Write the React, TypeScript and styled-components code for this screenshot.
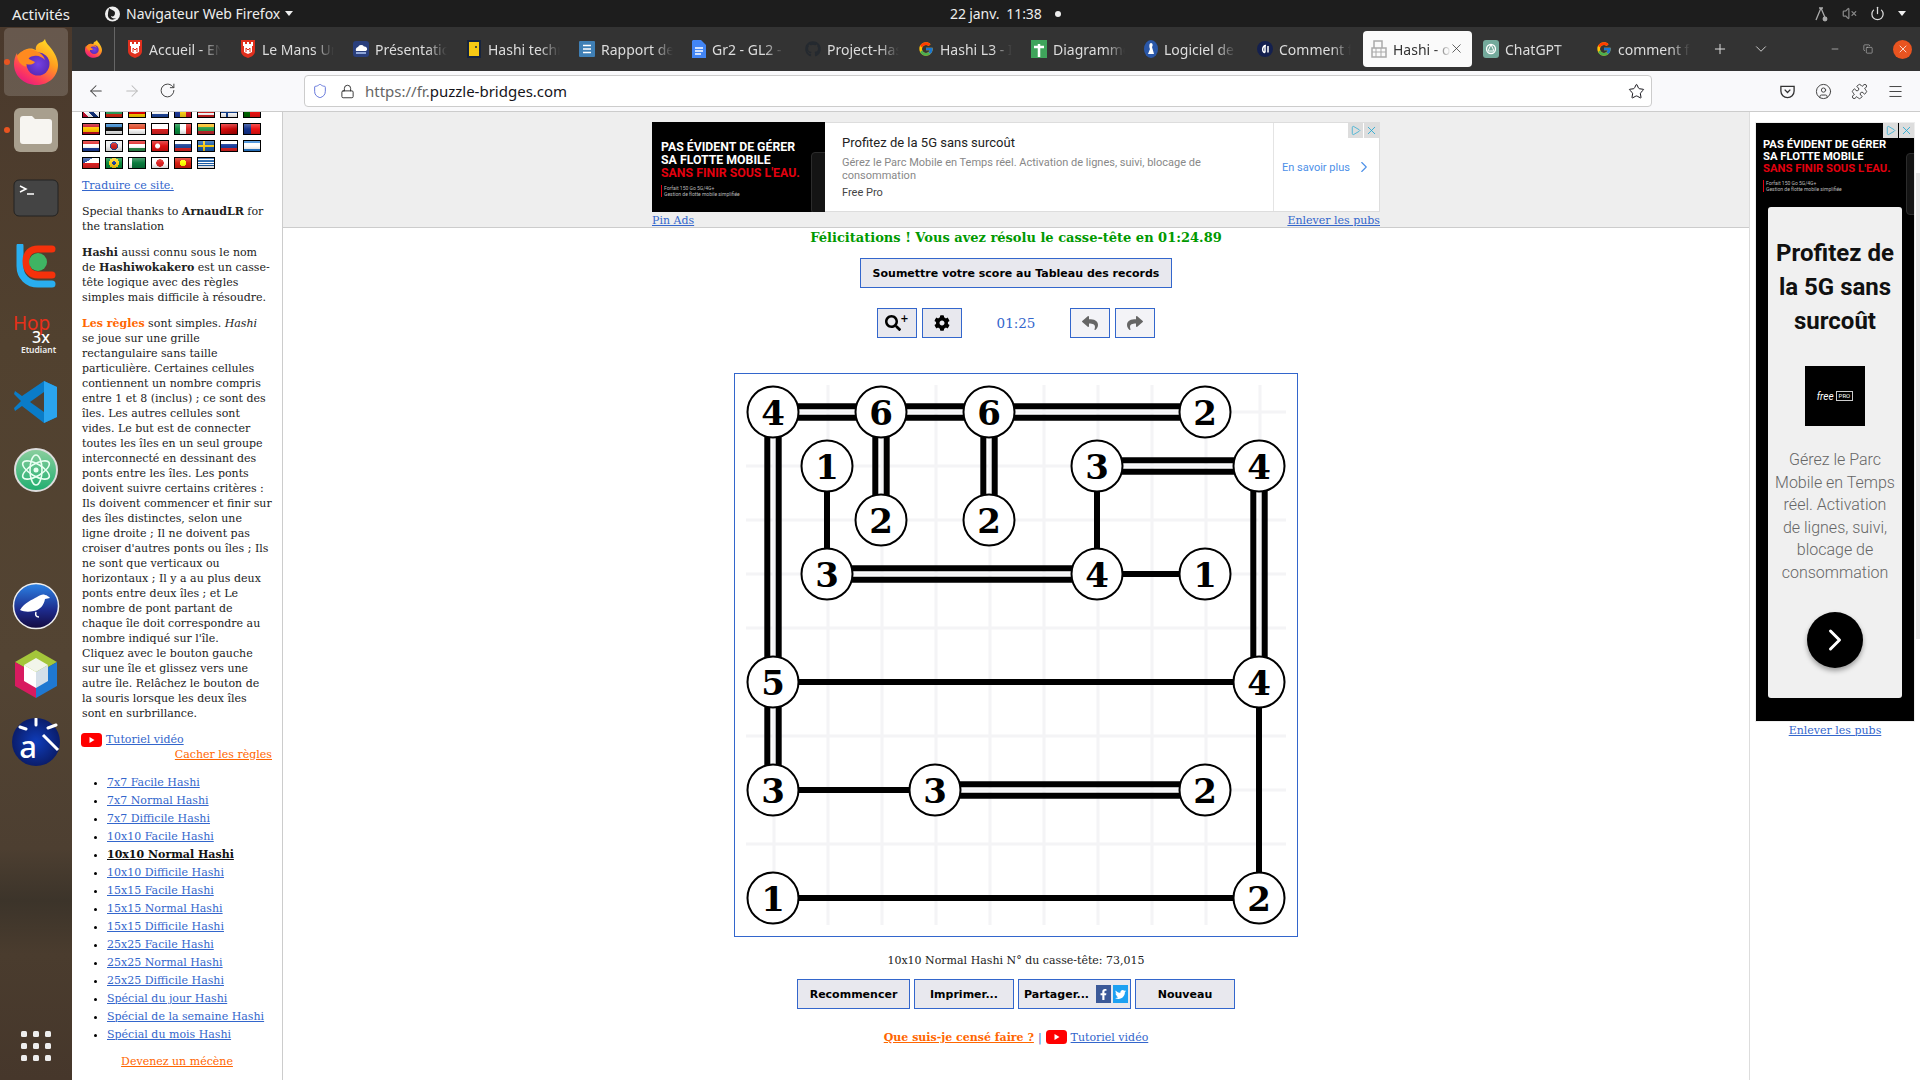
import React from 'react';
import styled, { createGlobalStyle } from 'styled-components';
import { ArrowLeft, ArrowRight, RotateCw, Star, Lock, Shield, Menu, Plus, ChevronDown, Minus, X, VolumeX, Power, Puzzle, CircleUser, Play, ChevronRight, Copy } from 'lucide-react';
import { FaFacebookF, FaTwitter, FaSearch, FaCog, FaReply, FaShare, FaGithub } from 'react-icons/fa';
import { FcGoogle } from 'react-icons/fc';

const Global = createGlobalStyle`
  html, body { margin: 0; padding: 0; height: 1080px; overflow: hidden; background: #fff; }
  * { box-sizing: border-box; }
  body { font-family: "DejaVu Serif", serif; font-size: 11px; color: #222; }
  a { color: #3366cc; }
`;

const uiFont = `"Noto Sans", "Open Sans", sans-serif`;

const Screen = styled.div`
  width: 1920px; height: 1080px; display: flex; flex-direction: column; overflow: hidden; position: relative;
`;
const TopBar = styled.div`
  height: 27px; background: #1d1d1d; color: #eee; font: 14px ${uiFont}; display: flex; align-items: center; position: relative; flex: none;
`;
const Activities = styled.span`margin-left: 12px; width: 92px; font-size: 15px; letter-spacing: -.1px;`;
const AppMenu = styled.span`display: flex; align-items: center; gap: 5px; width: 846px;`;
const Clock = styled.span`display: flex; align-items: center; gap: 13px; width: 125px; letter-spacing: -.1px;`;
const RecDot = styled.i`width: 6px; height: 6px; background: #eee; border-radius: 50%; display: block;`;
const Tray = styled.div`margin-left: auto; margin-right: 14px; display: flex; align-items: center; gap: 13px; color: #bbb;`;
const Caret = styled.i`width: 0; height: 0; border: 4.5px solid transparent; border-top: 5px solid #eee; border-bottom: 0; display: block;`;

const Body = styled.div`flex: 1; display: flex; min-height: 0;`;
const Dock = styled.div`
  width: 72px; flex: none; display: flex; flex-direction: column; padding-top: 1px; position: relative;
  background: linear-gradient(#4a392c 0, #51412f 30%, #534433 60%, #4d3f31 78%, #3c342a 83%, #4a3c2e 88%, #46372b 100%);
`;
const Slot = styled.div<{ $active?: boolean }>`
  height: 68px; flex: none; display: flex; align-items: center; justify-content: center; position: relative;
  margin: 0 4px; border-radius: 5px;
  background: ${p => p.$active ? 'rgba(255,255,255,.16)' : 'transparent'};
`;
const RunDot = styled.i`position: absolute; left: 0; top: 31px; width: 6px; height: 6px; border-radius: 50%; background: #e95420;`;
const HopIcon = styled.div`display: flex; flex-direction: column; align-items: center; font-family: "Noto Sans", sans-serif; line-height: 1; width: 44px;`;
const HopWord = styled.span`color: #e8301a; font-size: 19px; align-self: flex-start; margin-left: -1px; height: 15px;`;
const HopTimes = styled.span`color: #fff; font-size: 16px; font-weight: 500; margin: 0 0 1px 10px;`;
const HopSub = styled.span`color: #eee; font-size: 8.5px; font-weight: 600; margin-left: 5px;`;
const AppGrid = styled.div`
  margin-top: auto; margin-bottom: 19px; align-self: center; display: grid; grid-template-columns: repeat(3, 6px); gap: 6px;
`;
const AppDot = styled.i`width: 6px; height: 6px; background: #eee; border-radius: 1.5px; display: block;`;

const Browser = styled.div`flex: 1; display: flex; flex-direction: column; min-width: 0;`;
const TabBar = styled.div`height: 44px; background: #333; display: flex; align-items: center; flex: none; color: #ddd; font: 14px ${uiFont};`;
const BrandCell = styled.div`width: 43px; height: 44px; flex: none; display: flex; align-items: center; justify-content: center; border-right: 1px solid #666;`;
const Tab = styled.div<{ $active?: boolean }>`
  width: 113px; height: 36px; flex: none; display: flex; align-items: center; gap: 6px; position: relative;
  padding-left: ${p => p.$active ? '8px' : '12px'};
  ${p => p.$active ? `background:#fafafa;color:#333;border-radius:4px;width:109px;margin:0 -1px 0 5px;` : ''}
`;
const TabLabel = styled.span<{ $short?: boolean }>`
  width: ${p => p.$short ? '58px' : '72px'}; white-space: nowrap; overflow: hidden; display: block;
  -webkit-mask-image: linear-gradient(90deg, #000 72%, transparent);
  mask-image: linear-gradient(90deg, #000 72%, transparent);
`;
const TabClose = styled.span`position: absolute; right: 8px; top: 10px; display: flex;`;
const TabControls = styled.div`display: flex; align-items: center; margin-left: 15px; color: #ddd; flex: 1;`;
const ControlGap = styled.span<{ $w: number }>`width: ${p => p.$w}px; flex: none; display: block;`;
const CloseDot = styled.span`width: 19px; height: 19px; border-radius: 50%; background: #e95420; display: flex; align-items: center; justify-content: center; color: #fff;`;

const Toolbar = styled.div`height: 41px; background: #f9f9fb; border-bottom: 1px solid #ccc; display: flex; align-items: center; flex: none; color: #444;`;
const NavIcons = styled.div`width: 232px; padding-left: 15px; display: flex; gap: 18px; flex: none;`;
const UrlBox = styled.div`
  width: 1348px; height: 32px; background: #fff; border: 1px solid #ccc; border-radius: 4px; display: flex; align-items: center; flex: none;
  padding: 0 6px 0 7px; font: 15px ${uiFont}; color: #15141a;
`;
const UrlIcons = styled.span`display: flex; align-items: center; gap: 12px; margin-right: 10px; color: #222;`;
const UrlMuted = styled.span`color: #666;`;
const StarWrap = styled.span`margin-left: auto; display: flex; margin-right: 0;`;
const RightTools = styled.div`display: flex; align-items: center; gap: 19px; margin-left: 127px;`;

const Page = styled.div`flex: 1; display: flex; min-height: 0; background: #fff;`;
const Sidebar = styled.aside`width: 211px; flex: none; border-right: 1px solid #ccc; overflow: hidden; line-height: 15px;`;
const SideInner = styled.div`padding: 0 10px; margin-top: -6px;`;
const Flags = styled.div`display: flex; flex-wrap: wrap; gap: 5px; width: 190px; margin-bottom: -2px;`;
const Flag = styled.i<{ $bg: string }>`
  display: block; width: 18px; height: 12px; border: 1px solid #000; background: ${p => p.$bg}; position: relative;
  &::after { content: ""; position: absolute; inset: 0; background: linear-gradient(rgba(255,255,255,.28), rgba(255,255,255,0) 50%, rgba(0,0,0,.18)); }
`;
const Para = styled.p`margin: 11px 0 0;`;
const Orange = styled.b`color: #ff6600;`;
const VideoRow = styled.div`margin: 11px 0 0 -1px; display: flex; align-items: center; gap: 4px; height: 15px;`;
const RightLink = styled.div`text-align: right; height: 15px;`;
const OrangeLink = styled.a`color: #ff6600;`;
const Levels = styled.ul`margin: 12px 0 0; padding: 0 0 0 25px; line-height: 18px; color: #000;`;
const LevelItem = styled.li<{ $current?: boolean }>`a { ${p => p.$current ? 'color:#111;font-weight:700;' : ''} }`;
const Center = styled.div`text-align: center; margin-top: 10px;`;

const Main = styled.main`flex: 1; min-width: 0; display: flex; flex-direction: column; align-items: center;`;
const AdBand = styled.div`
  width: 100%; height: 116px; background: #eee; border-bottom: 1px solid #ccc; flex: none; display: flex; flex-direction: column; align-items: center; padding-top: 10px;
`;
const Banner = styled.div`width: 728px; height: 90px; background: #fff; border: 1px solid #ddd; display: flex; position: relative; font-family: Roboto, sans-serif; flex: none;`;
const BannerArt = styled.div`width: 173px; background: #000; flex: none; margin: -1px 0 -1px -1px; padding: 19px 0 0 9px; position: relative; overflow: hidden;`;
const ArtLine = styled.div<{ $red?: boolean; $size?: number; $lh?: number }>`
  color: ${p => p.$red ? '#e3000f' : '#fff'}; font-weight: 700; white-space: nowrap;
  font-size: ${p => p.$size || 11}px; line-height: ${p => p.$lh || 13}px;
`;
const ArtSmall = styled.div`color: #bbb; font-size: 5px; line-height: 6px; margin-top: 5px; border-left: 1px solid #e3000f; padding-left: 2px; white-space: nowrap;`;
const Phone = styled.i<{ $r: number; $t: number }>`
  position: absolute; right: ${p => p.$r}px; top: ${p => p.$t}px; width: 22px; height: 62px; border-radius: 4px; background: #141414; border: 1px solid #2c2c2c; display: block;
`;
const BannerCopy = styled.div`flex: 1; padding: 11px 17px 0; display: flex; flex-direction: column;`;
const BannerTitle = styled.div`font-size: 13px; line-height: 18px; color: #222;`;
const BannerDesc = styled.div`font-size: 11px; line-height: 13px; color: #888; margin-top: 4px; width: 370px;`;
const BannerBrand = styled.div`font-size: 11px; line-height: 14px; color: #444; margin-top: 4px;`;
const BannerCta = styled.div`width: 106px; border-left: 1px solid #e4e4e4; color: #4d90e8; font-size: 11px; display: flex; align-items: center; padding-left: 8px; gap: 5px; white-space: nowrap; flex: none;`;
const AdBadges = styled.div`position: absolute; right: 0; top: 0; display: flex; gap: 1px;`;
const AdBadge = styled.span`width: 15px; height: 15px; background: #ddd; color: #1aa6d0; display: flex; align-items: center; justify-content: center;`;
const BannerLinks = styled.div`width: 728px; display: flex; justify-content: space-between; line-height: 15px; height: 15px; padding-top: 1px;`;
const Congrats = styled.div`color: #009900; font-weight: 700; font-size: 13px; line-height: 18px; height: 18px; padding-top: 1px; white-space: nowrap;`;
const Button = styled.button<{ $w: number; $left?: boolean }>`
  width: ${p => p.$w}px; height: 30px; padding: 0; background: #e8e8ee; border: 1px solid #3366cc; color: #000; flex: none;
  font: 700 11px "DejaVu Sans", sans-serif; display: flex; align-items: center; justify-content: ${p => p.$left ? 'flex-start' : 'center'}; ${p => p.$left ? 'padding-left: 4px;' : ''}
`;
const SubmitRow = styled.div`margin-top: 12px; flex: none;`;
const ToolRow = styled.div`margin-top: 20px; display: flex; gap: 5px; align-items: center; flex: none; height: 30px;`;
const ToolButton = styled.button<{ $off?: boolean }>`
  width: 40px; height: 30px; padding: 0; border: 1px solid #3366cc; background: ${p => p.$off ? '#f3f3f7' : '#e8e8ee'};
  color: ${p => p.$off ? '#666' : '#000'}; display: flex; align-items: center; justify-content: center; flex: none; font-size: 16px;
`;
const PlusMark = styled.sup`font: 700 10px "DejaVu Sans", sans-serif; margin: -9px 0 0 -1px; line-height: 1;`;
const Timer = styled.div`width: 98px; text-align: center; color: #3366cc; font-size: 13.5px; flex: none;`;
const Board = styled.div`margin-top: 35px; width: 564px; height: 564px; border: 1px solid #3366cc; flex: none; background: #fff;`;
const Caption = styled.div`margin-top: 16px; line-height: 16px; height: 16px; color: #222; flex: none;`;
const ActionRow = styled.div`margin-top: 10px; display: flex; gap: 4px; flex: none;`;
const ShareBox = styled.span<{ $bg: string }>`width: 15px; height: 18px; background: ${p => p.$bg}; color: #fff; display: flex; align-items: center; justify-content: center; font-size: 11px; margin-left: 2px;`;
const ShareLabel = styled.span`margin-right: 5px; padding-left: 1px;`;
const HelpRow = styled.div`margin-top: 20px; display: flex; align-items: center; gap: 4px; height: 16px; flex: none; color: #3366cc;`;
const HelpLink = styled.a`color: #ff6600; font-weight: 700;`;

const RightCol = styled.aside`width: 171px; flex: none; border-left: 1px solid #ddd; padding: 10px 0 0 5px; display: flex; flex-direction: column; align-items: flex-start; position: relative;`;
const SkyAd = styled.div`width: 160px; height: 600px; background: #000; position: relative; border: 1px solid #eee; font-family: Roboto, sans-serif; display: flex; flex-direction: column; align-items: center; overflow: hidden; flex: none;`;
const SkyArt = styled.div`width: 100%; height: 84px; padding: 16px 0 0 7px; flex: none; position: relative;`;
const SkyCard = styled.div`width: 134px; height: 491px; background: #f0f0f0; border-radius: 3px; display: flex; flex-direction: column; align-items: center; text-align: center; padding-top: 29px; flex: none;`;
const SkyTitle = styled.div`font-size: 24px; font-weight: 700; line-height: 34px; color: #111;`;
const SkyLogo = styled.div`width: 60px; height: 60px; background: #000; margin-top: 28px; color: #fff; display: flex; align-items: center; justify-content: center; gap: 2px; font-size: 10px; font-style: italic; flex: none;`;
const SkyPro = styled.span`border: 1px solid #ccc; font-size: 6px; font-style: normal; padding: 0 2px; line-height: 8px;`;
const SkyDesc = styled.div`font-size: 16px; font-weight: 300; line-height: 22.5px; color: #666; margin-top: 23px;`;
const SkyGo = styled.div`width: 56px; height: 56px; border-radius: 50%; background: #000; color: #fff; margin-top: 28px; display: flex; align-items: center; justify-content: center; box-shadow: 0 3px 5px rgba(0,0,0,.35); flex: none;`;
const SkyLink = styled.a`display: block; width: 160px; text-align: center; line-height: 15px; margin-top: 1px;`;
const Scrollbar = styled.i`position: absolute; right: 0; top: 61px; width: 4px; height: 466px; background: #e8e8e8; display: block;`;

const YouTube = () => (
  <svg width="21" height="14" viewBox="0 0 21 14"><rect width="21" height="14" rx="3.5" fill="#f00" /><path d="M8.5 4l5 3-5 3z" fill="#fff" /></svg>
);

const FirefoxLogo = ({ s }: { s: number }) => (
  <svg width={s} height={s * 46 / 44} viewBox="0 0 44 46">
    <defs>
      <linearGradient id="ffa" x1="0.8" y1="0" x2="0.2" y2="1"><stop offset="0" stopColor="#ffe226" /><stop offset=".4" stopColor="#ff9a1f" /><stop offset=".75" stopColor="#ff3d5a" /><stop offset="1" stopColor="#e31587" /></linearGradient>
      <radialGradient id="ffb"><stop offset="0" stopColor="#7542e5" /><stop offset="1" stopColor="#5b2bb8" /></radialGradient>
    </defs>
    <path d="M31 0c1 5 5 7 8 12 4 6 5 11 5 14 0 11-9 20-21 20C10 46 0 37 0 25c0-4 1-8 3-11 0 2 1 3 2 4 1-4 4-7 8-8 5-1 6 0 9 1-1-3 1-7 6-8 2-1 2-2 3-3z" fill="url(#ffa)" />
    <circle cx="24" cy="25" r="11.5" fill="url(#ffb)" />
    <path d="M3 17c4-6 12-8 19-5 5 2 8 5 9 9-3-3-7-5-11-4-4 0-6 3-5 3l6 3c-2 3-6 3-9 2 1 3 0 3-2 2-4-2-6-5-7-10z" fill="#ff8a1f" />
  </svg>
);

const Favicon: React.FC<{ kind: string }> = ({ kind }) => {
  switch (kind) {
    case 'shield': return <svg width="16" height="18" viewBox="0 0 16 18"><path d="M1 0h14v11c0 4-4 6-7 7-3-1-7-3-7-7z" fill="#e0301e" /><path d="M3 2h2v2h2V2h2v2h2V2h2v4h-1v6l-4 2-4-2V6H3z" fill="#fff" /><path d="M6 12V8l2 2 2-2v4" stroke="#e0301e" strokeWidth="1" fill="none" /></svg>;
    case 'cloud': return <svg width="16" height="16" viewBox="0 0 16 16"><rect width="16" height="16" rx="3" fill="#2a3f7c" /><path d="M3 10a3 3 0 012-4 3.500 3.500 0 016-.5A2.500 2.500 0 0113 10z" fill="#fff" /><rect x="3" y="11" width="10" height="2" fill="#8fa6d8" /></svg>;
    case 'face': return <svg width="16" height="18" viewBox="0 0 16 18"><path d="M1 0h14v18H1z" fill="#16243f" /><path d="M3 2h10v14H3z" fill="#f6c915" /><circle cx="10" cy="7" r="1" fill="#16243f" /></svg>;
    case 'lines': return <svg width="16" height="16" viewBox="0 0 16 16"><rect width="16" height="16" rx="1" fill="#3f7fb5" /><path d="M4 4.500h8M4 8h8M4 11.500h8" stroke="#fff" strokeWidth="1.500" /></svg>;
    case 'doc': return <svg width="14" height="18" viewBox="0 0 14 18"><path d="M1 0h8l5 5v13H0V1z" fill="#4285f4" /><path d="M3 8h8M3 11h8M3 14h6" stroke="#fff" strokeWidth="1.500" /></svg>;
    case 'git': return <FaGithub size={16} color="#24292f" />;
    case 'g': return <FcGoogle size={16} />;
    case 'plus': return <svg width="16" height="18" viewBox="0 0 16 18"><rect width="16" height="18" fill="#3fa45b" /><path d="M8 4v13M3 7h10" stroke="#fff" strokeWidth="2.500" /></svg>;
    case 'pawn': return <svg width="14" height="18" viewBox="0 0 14 18"><ellipse cx="7" cy="9" rx="7" ry="9" fill="#2a57a8" /><path d="M7 3c2 0 2 3 1 4l2 7H4l2-5c-1-2-1-6 1-6z" fill="#fff" /></svg>;
    case 'alpha': return <svg width="16" height="16" viewBox="0 0 16 16"><circle cx="8" cy="8" r="8" fill="#14204f" /><path d="M9 4.500C5 4 4.500 11.500 8 11.500M8 5v6.500M11 5v6.500" stroke="#fff" strokeWidth="1.500" fill="none" /></svg>;
    case 'sheet': return <svg width="16" height="18" viewBox="0 0 16 18"><path d="M1 8h14v9H1zM3 1h8v7H3z" fill="none" stroke="#aaa" strokeWidth="1.500" /><path d="M1 12h14M5 8v9M10 8v9" stroke="#aaa" /></svg>;
    case 'gpt': return <svg width="16" height="18" viewBox="0 0 16 18"><rect width="16" height="18" rx="3" fill="#74aa9c" /><circle cx="8" cy="9" r="4.500" fill="none" stroke="#fff" strokeWidth="1.300" /><path d="M8 4.500L11 11H5z" fill="none" stroke="#fff" /></svg>;
    default: return null;
  }
};

const tabs: [string, string][] = [
  ['shield', 'Accueil - ENT'], ['shield', 'Le Mans Université'], ['cloud', 'Présentation'], ['face', 'Hashi technique'],
  ['lines', 'Rapport de projet'], ['doc', 'Gr2 - GL2 - Hashi'], ['git', 'Project-Hashi'], ['g', 'Hashi L3 - Info'],
  ['plus', 'Diagramme de'], ['pawn', 'Logiciel de dessin'], ['alpha', 'Comment faire'], ['sheet', 'Hashi - ou'],
  ['gpt', 'ChatGPT'], ['g', 'comment faire'],
];

const stripes = (a: string, b: string, c: string) => `linear-gradient(${a} 34%, ${b} 34% 66%, ${c} 66%)`;
const vert = (a: string, b: string, c: string) => `linear-gradient(90deg, ${a} 34%, ${b} 34% 66%, ${c} 66%)`;
const cross = (bg: string, c: string) => `linear-gradient(90deg, transparent 30%, ${c} 30% 45%, transparent 45%), linear-gradient(transparent 40%, ${c} 40% 60%, transparent 60%), ${bg}`;
const flags = [
  'linear-gradient(45deg,#c8102e 20%,#fff 20% 40%,#12327a 40% 60%,#fff 60% 80%,#c8102e 80%)', stripes('#fff', '#2a9b58', '#d62612'), stripes('#111', '#d00', '#ffce00'), stripes('#d22', '#fff', '#224aa0'),
  vert('#1e3a9a', '#fcd116', '#ce1126'), 'repeating-linear-gradient(#c22 0 2px,#fff 2px 4px)', cross('#fff', '#123f8a'), 'linear-gradient(90deg,#060 40%,#e11 40%)',
  'linear-gradient(#c60b1e 25%,#ffc400 25% 75%,#c60b1e 75%)', stripes('#2a7fc9', '#111', '#eee'), 'linear-gradient(#d42 50%,#fff 50%)', 'linear-gradient(#fff 50%,#d22 50%)',
  vert('#0a8a3e', '#fff', '#d22'), stripes('#fdb913', '#2a9b48', '#c1272d'), 'linear-gradient(135deg,#e11,#a00)', 'linear-gradient(90deg,#12328c 45%,#e11 45%)',
  stripes('#d22', '#fff', '#1a3c98'), 'radial-gradient(circle,#c22 0 3px,#24489a 3px 4px,transparent 4px),#eee', stripes('#d22', '#fff', '#2a8a4a'), 'radial-gradient(circle at 35% 50%,#fff 0 2px,transparent 3px),#d11',
  stripes('#fff', '#24489a', '#d22'), cross('#1a5cab', '#f9c80e'), stripes('#fff', '#1c3f9e', '#d22'), 'linear-gradient(#2a7fd4 18%,#fff 18% 82%,#2a7fd4 82%)',
  'linear-gradient(150deg,#24489a 30%,transparent 30%),linear-gradient(#fff 50%,#d22 50%)', 'radial-gradient(circle,#1c3f9e 0 2px,#fdd116 2px 5px,transparent 5px),#0a8a3e', 'linear-gradient(90deg,#fff 20%,#0a7a3c 20%)', 'radial-gradient(circle,#d22 0 3.500px,#fff 4px)',
  'radial-gradient(circle,#ff0 0 3px,transparent 3.500px),#d81e10', 'repeating-linear-gradient(#1a5ea8 0 1.200px,#fff 1.200px 2.400px)',
];

const levels = ['7x7 Facile Hashi', '7x7 Normal Hashi', '7x7 Difficile Hashi', '10x10 Facile Hashi', '10x10 Normal Hashi', '10x10 Difficile Hashi', '15x15 Facile Hashi', '15x15 Normal Hashi', '15x15 Difficile Hashi', '25x25 Facile Hashi', '25x25 Normal Hashi', '25x25 Difficile Hashi', 'Spécial du jour Hashi', 'Spécial de la semaine Hashi', 'Spécial du mois Hashi'];

const nodes: [number, number, number][] = [
  [0, 0, 4], [2, 0, 6], [4, 0, 6], [8, 0, 2], [1, 1, 1], [6, 1, 3], [9, 1, 4], [2, 2, 2], [4, 2, 2], [1, 3, 3], [6, 3, 4], [8, 3, 1],
  [0, 5, 5], [9, 5, 4], [0, 7, 3], [3, 7, 3], [8, 7, 2], [0, 9, 1], [9, 9, 2],
];
const bridges: [number, number, number, number, number][] = [
  [0, 0, 2, 0, 2], [2, 0, 4, 0, 2], [4, 0, 8, 0, 2], [2, 0, 2, 2, 2], [4, 0, 4, 2, 2], [1, 1, 1, 3, 1], [1, 3, 6, 3, 2], [6, 1, 6, 3, 1], [6, 1, 9, 1, 2], [6, 3, 8, 3, 1],
  [0, 0, 0, 5, 2], [0, 5, 0, 7, 2], [0, 7, 3, 7, 1], [3, 7, 8, 7, 2], [0, 5, 9, 5, 1], [9, 1, 9, 5, 2], [9, 5, 9, 9, 1], [0, 9, 9, 9, 1],
];
const at = (n: number) => 38 + 54 * n;

const BoardSvg = styled.svg`display: block;`;

const BoardArt = () => (
  <BoardSvg width="562" height="562" viewBox="0 0 562 562">
    {Array.from({ length: 10 }, (_, i) => (
      <g key={i} stroke="#f4f4f6" strokeWidth="3">
        <line x1={at(i) + 1} y1="11" x2={at(i) + 1} y2="551" />
        <line x1="11" y1={at(i)} x2="551" y2={at(i)} />
      </g>
    ))}
    {bridges.map(([a, b, c, d, n], i) => {
      const off = n === 2 ? [-5.7, 5.7] : [0];
      const horizontal = b === d;
      return off.map(o => (
        <line key={`${i}${o}`} x1={at(a) + (horizontal ? 0 : o)} y1={at(b) + (horizontal ? o : 0)} x2={at(c) + (horizontal ? 0 : o)} y2={at(d) + (horizontal ? o : 0)} stroke="#000" strokeWidth="6" />
      ));
    })}
    {nodes.map(([x, y, v], i) => (
      <g key={i}>
        <circle cx={at(x)} cy={at(y)} r="25.500" fill="#fff" stroke="#000" strokeWidth="2" />
        <text x={at(x)} y={at(y) + 12.500} textAnchor="middle" fontFamily='"DejaVu Serif", serif' fontWeight="700" fontSize="34" fill="#000">{v}</text>
      </g>
    ))}
  </BoardSvg>
);

export default function App() {
  return (
    <Screen>
      <Global />
      <TopBar>
        <Activities>Activités</Activities>
        <AppMenu>
          <svg width="17" height="17" viewBox="0 0 17 17"><circle cx="8.500" cy="9" r="7.500" fill="#eee" /><path d="M5 3c2 2 6 2 6 5s-2 4-4 3c0 2 3 3 5 2-4 4-9 0-8-4 0-3 1-4 1-6z" fill="#1d1d1d" /></svg>
          <span>Navigateur Web Firefox</span>
          <Caret />
        </AppMenu>
        <Clock><span>22 janv.&nbsp; 11:38</span><RecDot /></Clock>
        <Tray>
          <svg width="16" height="16" viewBox="0 0 16 16" fill="none" stroke="#aaa" strokeWidth="1.300"><path d="M8 2l-5 12M8 2l5 12M6 2h4" /><circle cx="12" cy="13" r="1.800" fill="#aaa" /></svg>
          <VolumeX size={15} color="#888" />
          <Power size={15} color="#ddd" />
          <Caret />
        </Tray>
      </TopBar>
      <Body>
        <Dock>
          <Slot $active><RunDot /><FirefoxLogo s={44} /></Slot>
          <Slot><RunDot />
            <svg width="44" height="44" viewBox="0 0 44 44"><rect width="44" height="44" rx="6" fill="#a89f8e" /><path d="M6 11a3 3 0 013-3h9l3 3h14a3 3 0 013 3v19a3 3 0 01-3 3H9a3 3 0 01-3-3z" fill="#f7f5f1" /></svg>
          </Slot>
          <Slot>
            <svg width="46" height="38" viewBox="0 0 46 38"><rect x="1" y="1" width="44" height="36" rx="5" fill="#444" stroke="#222" /><path d="M7 7l6 3-6 3" stroke="#fff" strokeWidth="1.500" fill="none" /><path d="M14 15h7" stroke="#fff" strokeWidth="1.500" /></svg>
          </Slot>
          <Slot>
            <svg width="40" height="44" viewBox="0 0 40 44"><path d="M4 2v20c0 11 8 18 18 18h14" stroke="#29aef0" strokeWidth="7" fill="none" strokeLinecap="round" /><path d="M36 5H22c-7 0-12 4-12 12s4 14 12 14h14" stroke="#f5310b" strokeWidth="7" fill="none" strokeLinecap="round" /><circle cx="22" cy="18" r="9" fill="#3fb463" /></svg>
          </Slot>
          <Slot><HopIcon><HopWord>Hop</HopWord><HopTimes>3x</HopTimes><HopSub>Etudiant</HopSub></HopIcon></Slot>
          <Slot>
            <svg width="44" height="44" viewBox="0 0 44 44"><path d="M30 1l13 6v30l-13 6-22-17-7 5-1-3 7-7-7-7 1-3 7 5z" fill="#0a7cc8" /><path d="M30 1l13 6v30l-13 6z" fill="#2aa4ee" /><path d="M30 12L16 22l14 10z" fill="#4f4032" /></svg>
          </Slot>
          <Slot>
            <svg width="44" height="44" viewBox="0 0 44 44"><defs><linearGradient id="atm" x1="0" y1="0" x2="0" y2="1"><stop offset="0" stopColor="#8ccf9e" /><stop offset="1" stopColor="#1fae70" /></linearGradient></defs><circle cx="22" cy="22" r="21" fill="url(#atm)" stroke="#ddd" strokeWidth="2" /><g fill="none" stroke="#eafff2" strokeWidth="1.600"><ellipse cx="22" cy="22" rx="15" ry="6" transform="rotate(30 22 22)" /><ellipse cx="22" cy="22" rx="15" ry="6" transform="rotate(-30 22 22)" /><ellipse cx="22" cy="22" rx="15" ry="6" transform="rotate(90 22 22)" /></g><circle cx="22" cy="22" r="2.500" fill="#eafff2" /></svg>
          </Slot>
          <Slot />
          <Slot>
            <svg width="48" height="48" viewBox="0 0 48 48"><defs><linearGradient id="brd" x1="0" y1="0" x2="0" y2="1"><stop offset="0" stopColor="#2b83e6" /><stop offset=".6" stopColor="#1d2a8a" /><stop offset="1" stopColor="#140a3f" /></linearGradient></defs><circle cx="24" cy="24" r="22.500" fill="url(#brd)" stroke="#eee" strokeWidth="1.500" /><path d="M8 28c5-8 12-10 17-13 3-2 6-3 8-2 2 0 4 2 5 3l-5 1c-1 6-5 11-11 12-5 1-10 1-14-1z" fill="#fff" /><path d="M24 30c-1 3 0 5 3 5" stroke="#fff" strokeWidth="1.500" fill="none" /></svg>
          </Slot>
          <Slot>
            <svg width="44" height="48" viewBox="0 0 44 48"><path d="M22 0l21 12-21 12L1 12z" fill="#a4c63a" /><path d="M1 12v24l21 12V24z" fill="#d81b60" /><path d="M43 12v24L22 48V24z" fill="#1f78d1" /><path d="M22 8l12 7-12 7-12-7z" fill="#f2f5ea" /><path d="M10 15v16l12 7V22z" fill="#fff" /><path d="M34 15v16l-12 7V22z" fill="#d4dfe9" /></svg>
          </Slot>
          <Slot>
            <svg width="48" height="48" viewBox="0 0 48 48"><defs><radialGradient id="anyd"><stop offset="0" stopColor="#0f3dbb" /><stop offset="1" stopColor="#0a1d6b" /></radialGradient></defs><circle cx="24" cy="24" r="24" fill="url(#anyd)" /><g stroke="#fff" strokeWidth="3" strokeLinecap="round"><path d="M24 1v6M8 9l6 2M36 10l8-3" /></g><text x="16" y="40" fontFamily='"Noto Sans", sans-serif' fontWeight="500" fontSize="31" fill="#fff" textAnchor="middle">a</text><path d="M31 17l15 15" stroke="#fff" strokeWidth="3" /></svg>
          </Slot>
          <AppGrid>{Array.from({ length: 9 }, (_, i) => <AppDot key={i} />)}</AppGrid>
        </Dock>
        <Browser>
          <TabBar>
            <BrandCell><FirefoxLogo s={17} /></BrandCell>
            {tabs.map(([k, l], i) => (
              <Tab key={i} $active={i === 11}>
                <Favicon kind={k} />
                <TabLabel $short={i === 11}>{l}</TabLabel>
                {i === 11 && <TabClose><X size={15} strokeWidth={1.2} /></TabClose>}
              </Tab>
            ))}
            <TabControls>
              <Plus size={16} strokeWidth={1.5} />
              <ControlGap $w={24} />
              <ChevronDown size={18} strokeWidth={1.2} />
              <ControlGap $w={60} />
              <Minus size={10} strokeWidth={1.5} />
              <ControlGap $w={23} />
              <Copy size={10} strokeWidth={1.2} />
              <ControlGap $w={20} />
              <CloseDot><X size={12} strokeWidth={1.5} /></CloseDot>
            </TabControls>
          </TabBar>
          <Toolbar>
            <NavIcons>
              <ArrowLeft size={18} strokeWidth={1.4} />
              <ArrowRight size={18} strokeWidth={1.4} color="#bbb" />
              <RotateCw size={17} strokeWidth={1.4} />
            </NavIcons>
            <UrlBox>
              <UrlIcons>
                <Shield size={16} strokeWidth={1.4} color="#5b6fd8" />
                <Lock size={15} strokeWidth={1.4} />
              </UrlIcons>
              <span><UrlMuted>https://fr.</UrlMuted>puzzle-bridges.com</span>
              <StarWrap><Star size={17} strokeWidth={1.4} /></StarWrap>
            </UrlBox>
            <RightTools>
              <svg width="17" height="17" viewBox="0 0 18 18" fill="none" stroke="#333" strokeWidth="1.400"><path d="M2 3.500h14v5a7 7 0 01-14 0z" /><path d="M6 7l3 3 3-3" /></svg>
              <CircleUser size={17} strokeWidth={1.4} />
              <Puzzle size={17} strokeWidth={1.4} />
              <Menu size={17} strokeWidth={1.4} />
            </RightTools>
          </Toolbar>
          <Page>
            <Sidebar>
              <SideInner>
                <Flags>{flags.map((f, i) => <Flag key={i} $bg={f} />)}</Flags>
                <Para><a href="#">Traduire ce site.</a></Para>
                <Para>Special thanks to <b>ArnaudLR</b> for the translation</Para>
                <Para><b>Hashi</b> aussi connu sous le nom de <b>Hashiwokakero</b> est un casse-tête logique avec des règles simples mais difficile à résoudre.</Para>
                <Para>
                  <Orange>Les règles</Orange> sont simples. <i>Hashi</i> se joue sur une grille rectangulaire sans taille particulière. Certaines cellules contiennent un nombre compris entre 1 et 8 (inclus) ; ce sont des îles. Les autres cellules sont vides. Le but est de connecter toutes les îles en un seul groupe interconnecté en dessinant des ponts entre les îles. Les ponts doivent suivre certains critères : Ils doivent commencer et finir sur des îles distinctes, selon une ligne droite ; Il ne doivent pas croiser d'autres ponts ou îles ; Ils ne sont que verticaux ou horizontaux ; Il y a au plus deux ponts entre deux îles ; et Le nombre de pont partant de chaque île doit correspondre au nombre indiqué sur l'île.
                  <br />
                  Cliquez avec le bouton gauche sur une île et glissez vers une autre île. Relâchez le bouton de la souris lorsque les deux îles sont en surbrillance.
                </Para>
                <VideoRow><YouTube /><a href="#">Tutoriel vidéo</a></VideoRow>
                <RightLink><OrangeLink href="#">Cacher les règles</OrangeLink></RightLink>
                <Levels>
                  {levels.map((l, i) => <LevelItem key={l} $current={i === 4}><a href="#">{l}</a></LevelItem>)}
                </Levels>
                <Center><OrangeLink href="#">Devenez un mécène</OrangeLink></Center>
              </SideInner>
            </Sidebar>
            <Main>
              <AdBand>
                <Banner>
                  <BannerArt>
                    <ArtLine $size={12.3}>PAS ÉVIDENT DE GÉRER</ArtLine>
                    <ArtLine $size={12.3}>SA FLOTTE MOBILE</ArtLine>
                    <ArtLine $size={12.3} $red>SANS FINIR SOUS L'EAU.</ArtLine>
                    <ArtSmall>Forfait 150 Go 5G/4G+<br />Gestion de flotte mobile simplifiée</ArtSmall>
                    <Phone $r={-8} $t={30} />
                  </BannerArt>
                  <BannerCopy>
                    <BannerTitle>Profitez de la 5G sans surcoût</BannerTitle>
                    <BannerDesc>Gérez le Parc Mobile en Temps réel. Activation de lignes, suivi, blocage de consommation</BannerDesc>
                    <BannerBrand>Free Pro</BannerBrand>
                  </BannerCopy>
                  <BannerCta>En savoir plus <ChevronRight size={18} strokeWidth={1.5} /></BannerCta>
                  <AdBadges>
                    <AdBadge><Play size={11} strokeWidth={1.5} /></AdBadge>
                    <AdBadge><X size={13} strokeWidth={1.5} /></AdBadge>
                  </AdBadges>
                </Banner>
                <BannerLinks><a href="#">Pin Ads</a><a href="#">Enlever les pubs</a></BannerLinks>
              </AdBand>
              <Congrats>Félicitations ! Vous avez résolu le casse-tête en 01:24.89</Congrats>
              <SubmitRow><Button $w={312}>Soumettre votre score au Tableau des records</Button></SubmitRow>
              <ToolRow>
                <ToolButton><FaSearch /><PlusMark>+</PlusMark></ToolButton>
                <ToolButton><FaCog /></ToolButton>
                <Timer>01:25</Timer>
                <ToolButton $off><FaReply /></ToolButton>
                <ToolButton $off><FaShare /></ToolButton>
              </ToolRow>
              <Board><BoardArt /></Board>
              <Caption>10x10 Normal Hashi N° du casse-tête: 73,015</Caption>
              <ActionRow>
                <Button $w={113}>Recommencer</Button>
                <Button $w={100}>Imprimer...</Button>
                <Button $w={113} $left>
                  <ShareLabel>Partager...</ShareLabel>
                  <ShareBox $bg="#3b5998"><FaFacebookF /></ShareBox>
                  <ShareBox $bg="#1da1f2"><FaTwitter /></ShareBox>
                </Button>
                <Button $w={100}>Nouveau</Button>
              </ActionRow>
              <HelpRow>
                <HelpLink href="#">Que suis-je censé faire ?</HelpLink>
                <span>|</span>
                <YouTube />
                <a href="#">Tutoriel vidéo</a>
              </HelpRow>
            </Main>
            <RightCol>
              <SkyAd>
                <SkyArt>
                  <ArtLine $size={11.3} $lh={12}>PAS ÉVIDENT DE GÉRER</ArtLine>
                  <ArtLine $size={11.3} $lh={12}>SA FLOTTE MOBILE</ArtLine>
                  <ArtLine $size={11.3} $lh={12} $red>SANS FINIR SOUS L'EAU.</ArtLine>
                  <ArtSmall>Forfait 150 Go 5G/4G+<br />Gestion de flotte mobile simplifiée</ArtSmall>
                  <Phone $r={-14} $t={30} />
                  <AdBadges>
                    <AdBadge><Play size={11} strokeWidth={1.5} /></AdBadge>
                    <AdBadge><X size={13} strokeWidth={1.5} /></AdBadge>
                  </AdBadges>
                </SkyArt>
                <SkyCard>
                  <SkyTitle>Profitez de<br />la 5G sans<br />surcoût</SkyTitle>
                  <SkyLogo><span>free</span><SkyPro>PRO</SkyPro></SkyLogo>
                  <SkyDesc>Gérez le Parc<br />Mobile en Temps<br />réel. Activation<br />de lignes, suivi,<br />blocage de<br />consommation</SkyDesc>
                  <SkyGo><ChevronRight size={36} strokeWidth={2} /></SkyGo>
                </SkyCard>
              </SkyAd>
              <SkyLink href="#">Enlever les pubs</SkyLink>
              <Scrollbar />
            </RightCol>
          </Page>
        </Browser>
      </Body>
    </Screen>
  );
}
